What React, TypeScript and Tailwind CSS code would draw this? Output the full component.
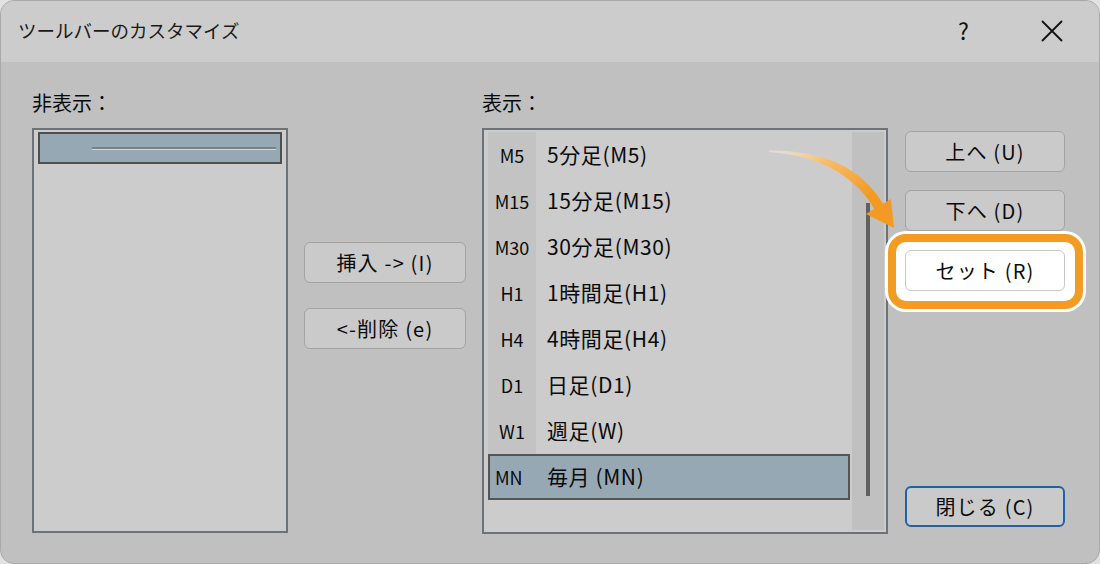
import React from "react";

const FONT = '"Noto Sans CJK JP", "Noto Sans", sans-serif';

type Row = { code: string; label: string; selected?: boolean };

const rows: Row[] = [
  { code: "M5", label: "5分足(M5)" },
  { code: "M15", label: "15分足(M15)" },
  { code: "M30", label: "30分足(M30)" },
  { code: "H1", label: "1時間足(H1)" },
  { code: "H4", label: "4時間足(H4)" },
  { code: "D1", label: "日足(D1)" },
  { code: "W1", label: "週足(W)" },
  { code: "MN", label: "毎月 (MN)", selected: true },
];

function Btn({
  children,
  className = "",
  border = "border-[1.5px] border-[#a3a3a3]",
  bg = "bg-[#cacaca]",
}: {
  children: React.ReactNode;
  className?: string;
  border?: string;
  bg?: string;
}) {
  return (
    <div
      className={
        "h-[41px] w-full flex items-center justify-center rounded-[6px] text-[20px] tracking-[1.2px] text-[#0a0a0a] " +
        border +
        " " +
        bg +
        " " +
        className
      }
    >
      {children}
    </div>
  );
}

function Arrow() {
  return (
    <svg
      className="absolute left-[760px] top-[130px] pointer-events-none"
      width="140"
      height="100"
      viewBox="0 0 140 100"
    >
      <defs>
        <linearGradient id="ag" x1="0" y1="0" x2="1" y2="0.6">
          <stop offset="0" stopColor="#fff4e2" stopOpacity="0.4" />
          <stop offset="0.45" stopColor="#f8bc6a" />
          <stop offset="1" stopColor="#f29a22" />
        </linearGradient>
      </defs>
      <path d="M8 19.5 Q90 19 122 73 L114 79 Q84 27 8 21 Z" fill="url(#ag)" />
      <path d="M105 83 L130 68 L133 97 Z" fill="#f29a22" />
    </svg>
  );
}

export default function App() {
  return (
    <div className="w-[1100px] h-[564px] bg-[#e2e2e2]" style={{ fontFamily: FONT }}>
      <div className="relative w-full h-full rounded-[14px] border border-[#a9a9a9] overflow-hidden flex flex-col bg-[#c0c0c0]">
        {/* title bar */}
        <div className="h-[61px] shrink-0 bg-[#cccccc] flex items-center pl-[17px] pr-[36px]">
          <span className="text-[18.5px] text-[#1a1a1a] mt-[-2px]">ツールバーのカスタマイズ</span>
          <span className="ml-auto text-[23px] text-[#111] mr-[72px] mt-[-2px]">?</span>
          <svg width="22" height="22" viewBox="0 0 22 22" className="mt-[-2px]">
            <path d="M1 1 L21 21 M21 1 L1 21" stroke="#111" strokeWidth="1.8" />
          </svg>
        </div>

        {/* body */}
        <div className="flex flex-1 pl-[31px] pt-[26px]">
          {/* hidden list */}
          <div className="w-[256px] flex flex-col">
            <div className="h-[40px] pt-[1px] text-[20px] leading-[28px] text-[#0a0a0a]">非表示：</div>
            <div className="h-[405px] border-2 border-[#6d7178] bg-[#cccccc] px-[4px] pt-[2px]">
              <div className="h-[32px] border-2 border-[#4f4f4f] bg-[#97a8b5] flex items-center pl-[52px] pr-[4px]">
                <div className="w-full">
                  <div className="h-[2px] bg-[#7f7f7f]" />
                  <div className="h-[1px] bg-[#d8d8d8]" />
                </div>
              </div>
            </div>
          </div>

          {/* middle buttons */}
          <div className="w-[194px] px-[16px] pt-[154px] flex flex-col gap-[25px]">
            <Btn>挿入 -&gt; (I)</Btn>
            <Btn>&lt;-削除 (e)</Btn>
          </div>

          {/* shown list */}
          <div className="w-[406px] flex flex-col">
            <div className="h-[40px] pt-[1px] text-[20px] leading-[28px] text-[#0a0a0a]">表示：</div>
            <div className="h-[406px] border-2 border-[#6d7178] bg-[#cccccc] flex pl-[4px] pt-[2px] pb-[2px] pr-[2px]">
              <div className="flex-1 flex flex-col">
                {rows.map((r) => (
                  <div
                    key={r.code}
                    className={
                      "h-[46px] flex items-center " +
                      (r.selected ? "border-2 border-[#555] bg-[#97a8b5] mr-[2px]" : "")
                    }
                  >
                    <div
                      className={
                        "h-full flex items-center text-[18px] text-[#0a0a0a] " +
                        (r.selected ? "w-[46px] pl-[5px]" : "w-[48px] justify-center bg-[#c3c3c3]")
                      }
                    >
                      {r.code}
                    </div>
                    <div className="pl-[11px] text-[21px] tracking-[0.6px] text-[#0a0a0a]">{r.label}</div>
                  </div>
                ))}
              </div>
              {/* scrollbar */}
              <div className="w-[32px] bg-[#c0c0c0] flex justify-center">
                <div className="w-[4px] mt-[71px] h-[293px] bg-[#606060]" />
              </div>
            </div>
          </div>

          {/* right buttons */}
          <div className="w-[160px] ml-[17px] pt-[43px] flex flex-col">
            <Btn>上へ (U)</Btn>
            <div className="h-[18px]" />
            <Btn>下へ (D)</Btn>
            <div className="h-[19px]" />
            <div className="relative">
              <div className="absolute left-[-17px] right-[-18px] top-[-16px] bottom-[-18px] rounded-[18px] border-[8px] border-[#f39c23] bg-white shadow-[0_0_0_3px_#ffffff]" />
              <Btn className="relative" bg="bg-white" border="border-[1.5px] border-[#c8c8c8]">
                セット (R)
              </Btn>
            </div>
            <div className="h-[195px]" />
            <Btn className="h-[40px]" border="border-2 border-[#1f62ac]">
              閉じる (C)
            </Btn>
          </div>
        </div>

        <Arrow />
      </div>
    </div>
  );
}
